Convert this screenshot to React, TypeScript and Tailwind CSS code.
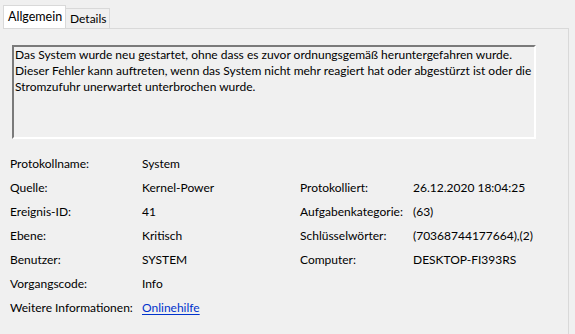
const rows: [string, React.ReactNode, string, string][] = [
  ["Protokollname:", "System", "", ""],
  ["Quelle:", "Kernel-Power", "Protokolliert:", "26.12.2020 18:04:25"],
  ["Ereignis-ID:", "41", "Aufgabenkategorie:", "(63)"],
  ["Ebene:", "Kritisch", "Schlüsselwörter:", "(70368744177664),(2)"],
  ["Benutzer:", "SYSTEM", "Computer:", "DESKTOP-FI393RS"],
  ["Vorgangscode:", "Info", "", ""],
  [
    "Weitere Informationen:",
    <span className="text-[#0033cc] underline underline-offset-2">Onlinehilfe</span>,
    "",
    "",
  ],
];

export default function App() {
  return (
    <div className="w-[575px] h-[334px] overflow-hidden bg-[#f0f0f0] text-[12px] leading-[16px] text-black font-['Lato',sans-serif]">
      <div className="flex items-end h-[28px] pl-[3px]">
        <div className="h-[23px] w-[63px] pl-[4px] pt-[3px] text-[12.5px] border border-b-0 border-[#d9d9d9] bg-white">
          Allgemein
        </div>
        <div className="h-[20px] w-[44px] pl-[4px] pt-[2px] border border-l-0 border-b-0 border-[#d9d9d9] bg-[#f0f0f0]">
          Details
        </div>
      </div>
      <div className="ml-[3px] w-[566px] h-[306px] border-t border-r border-[#d9d9d9] bg-[#f0f0f0]">
        <div className="ml-[9px] mt-[16px] w-[524px] h-[94px] border-2 border-t-[#7a7a7a] border-l-[#7a7a7a] border-b-white border-r-white pl-[1px]">
          <p>
            Das System wurde neu gestartet, ohne dass es zuvor ordnungsgemäß heruntergefahren wurde.
            <br />
            Dieser Fehler kann auftreten, wenn das System nicht mehr reagiert hat oder abgestürzt ist oder die
            <br />
            Stromzufuhr unerwartet unterbrochen wurde.
          </p>
        </div>
        <div className="mt-[13px] ml-[7px] grid grid-cols-[132px_158px_113px_1fr] auto-rows-[24px] items-center">
          {rows.map(([l, v, l2, v2], i) => (
            <div key={i} className="contents">
              <div>{l}</div>
              <div>{v}</div>
              <div>{l2}</div>
              <div>{v2}</div>
            </div>
          ))}
        </div>
      </div>
    </div>
  );
}
